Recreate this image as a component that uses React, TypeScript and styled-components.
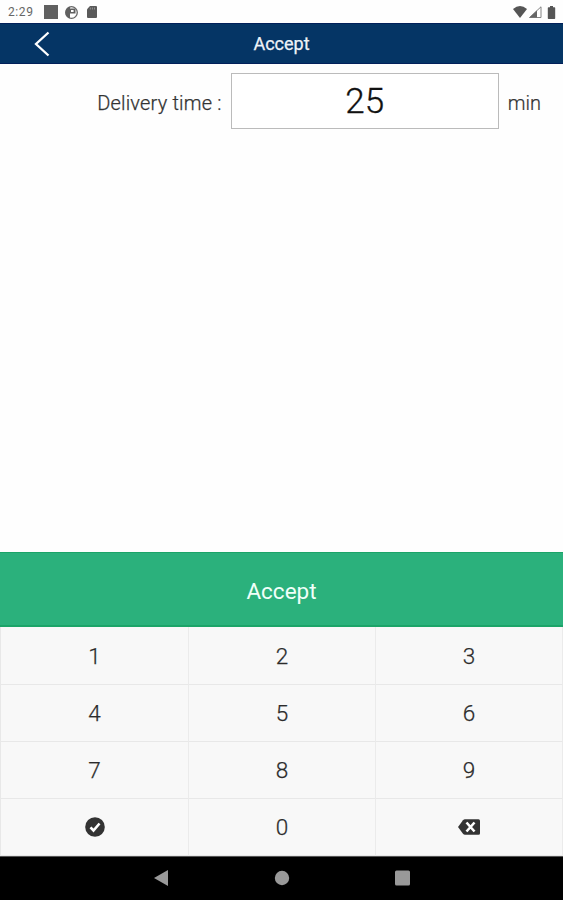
import React from 'react';
import styled, { createGlobalStyle } from 'styled-components';

const GlobalStyle = createGlobalStyle`
  * { box-sizing: border-box; }
  body { margin: 0; background: #fff; font-family: Roboto, "Liberation Sans", sans-serif; }
`;

const Screen = styled.div`
  display: flex;
  flex-direction: column;
  width: 563px;
  height: 900px;
  overflow: hidden;
  background: #fefefe;
`;

const StatusBar = styled.div`
  display: flex;
  align-items: center;
  justify-content: space-between;
  height: 23px;
  padding: 1px 6px 0 8px;
  color: #666;
  font-size: 12px;
  letter-spacing: 0.6px;
`;

const StatusGroup = styled.div<{ $gap: number }>`
  display: flex;
  align-items: center;
  gap: ${(p) => p.$gap}px;
  svg { display: block; }
`;

const Clock = styled.span`
  width: 29px;
`;

const Header = styled.header`
  display: grid;
  grid-template-columns: 60px 1fr 60px;
  align-items: center;
  height: 41px;
  background: #053565;
  border-top: 1px solid #02205a;
  border-bottom: 1px solid #02205a;
`;

const BackButton = styled.button`
  display: flex;
  padding: 0 0 0 33px;
  border: 0;
  background: none;
`;

const Title = styled.h1`
  margin: 0;
  color: #eef3f8;
  font-size: 18px;
  font-weight: 400;
  line-height: 24px;
  text-align: center;
  -webkit-text-stroke: 0.25px #eef3f8;
`;

const Body = styled.main`
  flex: 1;
`;

const TimeRow = styled.div`
  display: flex;
  align-items: center;
  justify-content: flex-end;
  height: 74px;
  padding: 0 22px 0 0;
`;

const Label = styled.label`
  margin: 4px 9px 0 0;
  color: #333;
  font-weight: 300;
  font-size: 20px;
  letter-spacing: 0.2px;
  white-space: nowrap;
  -webkit-text-stroke: 0.25px #333;
`;

const TimeBox = styled.div`
  display: flex;
  align-items: center;
  justify-content: center;
  width: 268px;
  height: 56px;
  border: 1px solid #bbb;
  background: #fff;
  color: #111;
  font-size: 35px;
  font-weight: 300;
  -webkit-text-stroke: 0.3px #111;
`;

const Unit = styled.span`
  margin: 4px 0 0 9px;
  color: #333;
  font-size: 20px;
  font-weight: 300;
  -webkit-text-stroke: 0.2px #333;
`;

const AcceptButton = styled.button`
  height: 75px;
  padding: 4px 0 0;
  border: 0;
  border-top: 1px solid #1ba468;
  border-bottom: 2px solid #1ba468;
  background: #2bb17c;
  color: #f0fff9;
  font-family: inherit;
  font-size: 22.5px;
`;

const Keypad = styled.div`
  display: grid;
  grid-template-columns: 188px 187px 187px;
  grid-template-rows: 58px 57px 57px 57px;
  border-left: 1px solid #e8e8e8;
  background: #f8f8f8;
`;

const Key = styled.button`
  display: flex;
  align-items: center;
  justify-content: center;
  padding: 0;
  border: 0;
  border-right: 1px solid #ebebeb;
  border-bottom: 1px solid #e8e8e8;
  background: none;
  color: #2b2b2b;
  font-family: inherit;
  font-size: 22.5px;
  font-weight: 300;
  -webkit-text-stroke: 0.25px #2b2b2b;
`;

const NavBar = styled.nav`
  display: flex;
  align-items: center;
  justify-content: center;
  gap: 105px;
  height: 44px;
  padding: 0 0 2px;
  border-top: 1px solid #555;
  background: #000;
  svg { display: block; }
`;

const CheckIcon = () => (
  <svg width="20" height="20" viewBox="0 0 20 20">
    <circle cx="10" cy="10" r="9.8" fill="#333" />
    <path d="M5.5 10.3l3 3.2 6-7" fill="none" stroke="#fff" strokeWidth="2.6" />
  </svg>
);

const DeleteIcon = () => (
  <svg width="22" height="16" viewBox="0 0 22 16">
    <path d="M0 8L5 1.2Q5.8.3 7 .3H20.5Q22 .3 22 1.8V14.2Q22 15.7 20.5 15.7H7Q5.8 15.7 5 14.8Z" fill="#333" />
    <path d="M8.5 3.5l8 9m0-9l-8 9" stroke="#fff" strokeWidth="2.6" />
  </svg>
);

const keys = ['1', '2', '3', '4', '5', '6', '7', '8', '9', 'ok', '0', 'delete'];

const keyFace = (key: string) => {
  if (key === 'ok') return <CheckIcon />;
  if (key === 'delete') return <DeleteIcon />;
  return key;
};

export default function App() {
  return (
    <Screen>
      <GlobalStyle />
      <StatusBar>
        <StatusGroup $gap={7}>
          <Clock>2:29</Clock>
          <svg width="14" height="14"><path d="M0 0h14v14H0z" fill="#606060" /></svg>
          <svg width="13" height="13" viewBox="0 0 13 13">
            <circle cx="6.5" cy="6.5" r="5.8" fill="#fff" stroke="#666" strokeWidth="1.3" />
            <path d="M5 .7A6 6 0 0 0 5 12.3z" fill="#606060" />
            <path d="M5 2.5h5.5v5H5z" fill="#606060" />
            <path d="M6 4h2.6v2H6z" fill="#fff" />
          </svg>
          <svg width="14" height="12" viewBox="0 0 14 12">
            <path d="M5 0h6q1 0 1 1v10q0 1-1 1H3q-1 0-1-1V3.2z" fill="#5a5a5a" />
            <path d="M5.3 1.5v2M7.4 1.5v2M9.5 1.5v2" stroke="#999" strokeWidth=".9" />
          </svg>
        </StatusGroup>
        <StatusGroup $gap={2}>
          <svg width="14" height="12" viewBox="0 0 14 12"><path d="M0 3Q7-3 14 3L7 12z" fill="#555" /></svg>
          <svg width="13" height="12" viewBox="0 0 13 12">
            <path d="M.5 11.5L12 .8v10.7z" fill="#fff" stroke="#777" strokeWidth=".9" />
            <path d="M.5 11.5L8 4.5v7z" fill="#666" />
          </svg>
          <svg width="13" height="13" viewBox="0 0 13 13"><path d="M4.5 1.2H6V0h3v1.2h1.5q.7 0 .7.7v10.4q0 .7-.7.7h-6q-.7 0-.7-.7V1.9q0-.7.7-.7z" fill="#555" /></svg>
        </StatusGroup>
      </StatusBar>
      <Header>
        <BackButton aria-label="Back">
          <svg width="18" height="26" viewBox="0 0 18 26"><path d="M15.5 1.5L3 13l12.5 11.5" fill="none" stroke="#fff" strokeWidth="2.3" /></svg>
        </BackButton>
        <Title>Accept</Title>
      </Header>
      <Body>
        <TimeRow>
          <Label>Delivery time :</Label>
          <TimeBox>25</TimeBox>
          <Unit>min</Unit>
        </TimeRow>
      </Body>
      <AcceptButton>Accept</AcceptButton>
      <Keypad>
        {keys.map((key) => (
          <Key key={key} aria-label={key}>{keyFace(key)}</Key>
        ))}
      </Keypad>
      <NavBar>
        <svg width="16" height="18"><path d="M1 9L15 1v16z" fill="#999" /></svg>
        <svg width="16" height="16"><circle cx="8" cy="8" r="7.2" fill="#999" /></svg>
        <svg width="16" height="16"><rect x="0" y=".5" width="15" height="15" rx="1.5" fill="#999" /></svg>
      </NavBar>
    </Screen>
  );
}
